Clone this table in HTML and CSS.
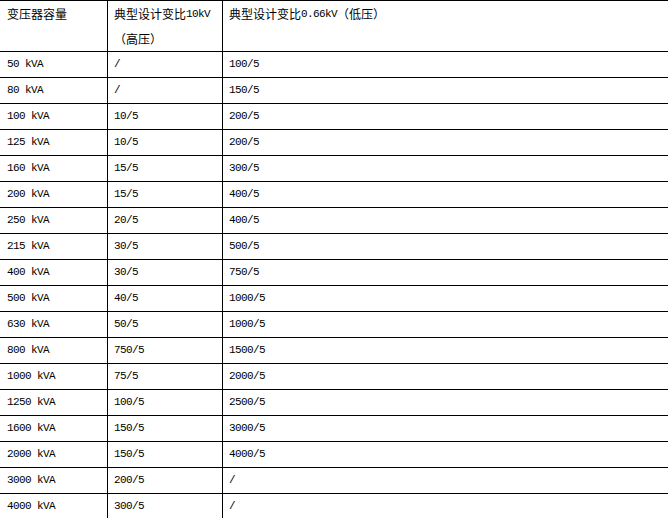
FILE: index.html
```html
<!DOCTYPE html>
<html>
<head>
<meta charset="utf-8">
<link rel="stylesheet" href="styles.css">
</head>
<body>
<table class="ct">
  <colgroup><col class="c1"><col class="c2"><col class="c3"></colgroup>
  <tr class="head">
    <td><div class="ln"><span class="zh">变压器容量</span></div><div class="ln"></div></td>
    <td><div class="ln"><span class="zh">典型设计变比</span><span class="lat">10kV</span></div><div class="ln"><span class="zh">（高压）</span></div></td>
    <td><div class="ln"><span class="zh">典型设计变比</span><span class="lat">0.66kV</span><span class="zh">（低压）</span></div><div class="ln"></div></td>
  </tr>
  <tr><td>50 kVA</td><td>/</td><td>100/5</td></tr>
  <tr><td>80 kVA</td><td>/</td><td>150/5</td></tr>
  <tr><td>100 kVA</td><td>10/5</td><td>200/5</td></tr>
  <tr><td>125 kVA</td><td>10/5</td><td>200/5</td></tr>
  <tr><td>160 kVA</td><td>15/5</td><td>300/5</td></tr>
  <tr><td>200 kVA</td><td>15/5</td><td>400/5</td></tr>
  <tr><td>250 kVA</td><td>20/5</td><td>400/5</td></tr>
  <tr><td>215 kVA</td><td>30/5</td><td>500/5</td></tr>
  <tr><td>400 kVA</td><td>30/5</td><td>750/5</td></tr>
  <tr><td>500 kVA</td><td>40/5</td><td>1000/5</td></tr>
  <tr><td>630 kVA</td><td>50/5</td><td>1000/5</td></tr>
  <tr><td>800 kVA</td><td>750/5</td><td>1500/5</td></tr>
  <tr><td>1000 kVA</td><td>75/5</td><td>2000/5</td></tr>
  <tr><td>1250 kVA</td><td>100/5</td><td>2500/5</td></tr>
  <tr><td>1600 kVA</td><td>150/5</td><td>3000/5</td></tr>
  <tr><td>2000 kVA</td><td>150/5</td><td>4000/5</td></tr>
  <tr><td>3000 kVA</td><td>200/5</td><td>/</td></tr>
  <tr><td>4000 kVA</td><td>300/5</td><td>/</td></tr>
</table>
</body>
</html>
```
FILE: styles.css
```css
html, body {
  margin: 0;
  padding: 0;
  background: #fff;
  overflow: hidden;
}
.ct {
  border-collapse: separate;
  border-spacing: 0;
  table-layout: fixed;
  width: 668px;
  border-top: 1px solid #000;
  font-family: "Liberation Mono", "Noto Sans CJK SC", monospace;
  font-size: 11px;
  letter-spacing: -0.6px;
  color: #000;
}
.c1 { width: 108px; }
.c2 { width: 115px; }
.c3 { width: auto; }
.ct td {
  border-bottom: 1px solid #000;
  height: 25px;
  line-height: 25px;
  padding: 0 0 0 6px;
  vertical-align: middle;
  white-space: nowrap;
  overflow: hidden;
}
.ct td:first-child { padding-left: 7px; }
.ct td:nth-child(1),
.ct td:nth-child(2) { border-right: 1px solid #000; }
.ct .head td {
  height: 50px;
  vertical-align: top;
}
.ln {
  height: 25px;
  line-height: 25px;
  overflow: hidden;
}
.zh {
  font-family: "Noto Sans CJK SC", sans-serif;
  font-size: 12px;
  letter-spacing: 0;
  vertical-align: top;
  line-height: 25px;
}
.lat {
  vertical-align: top;
  line-height: 25px;
  position: relative;
  top: 1px;
}
```
